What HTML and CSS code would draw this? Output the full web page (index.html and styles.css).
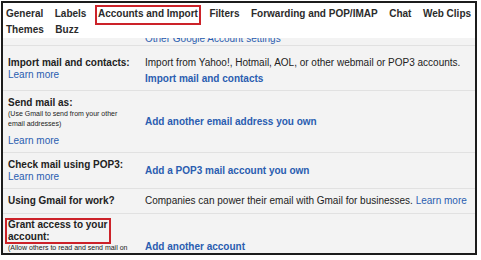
FILE: index.html
```html
<!DOCTYPE html>
<html lang="en">
<head>
    <meta charset="UTF-8">
    <meta name="viewport" content="width=device-width, initial-scale=1.0">
    <title>Gmail Settings - Accounts and Import</title>
    <link rel="stylesheet" href="styles.css">
</head>
<body>
    <div class="frame">
        <!-- Settings tabs -->
        <div class="tabs">
            <span class="tab">General</span>
            <span class="tab">Labels</span>
            <span class="tab active">Accounts and Import</span>
            <span class="tab">Filters</span>
            <span class="tab">Forwarding and POP/IMAP</span>
            <span class="tab">Chat</span>
            <span class="tab">Web Clips</span>
            <span class="tab">Themes</span>
            <span class="tab">Buzz</span>
        </div>

        <div class="settings">
            <div class="row row-cut">
                <div class="cell-label"></div>
                <div class="cell-value"><div class="cut-text"><a class="link">Other Google Account settings</a></div></div>
            </div>

            <div class="row row-import">
                <div class="cell-label">
                    <div class="label">Import mail and contacts:</div>
                    <a class="learn">Learn more</a>
                </div>
                <div class="cell-value top">
                    <div class="text">Import from Yahoo!, Hotmail, AOL, or other webmail or POP3 accounts.</div>
                    <a class="action spaced">Import mail and contacts</a>
                </div>
            </div>

            <div class="row row-send">
                <div class="cell-label">
                    <div class="label">Send mail as:</div>
                    <div class="note">(Use Gmail to send from your other<br>email addresses)</div>
                    <a class="learn spaced">Learn more</a>
                </div>
                <div class="cell-value">
                    <a class="action">Add another email address you own</a>
                </div>
            </div>

            <div class="row row-check">
                <div class="cell-label">
                    <div class="label">Check mail using POP3:</div>
                    <a class="learn">Learn more</a>
                </div>
                <div class="cell-value">
                    <a class="action">Add a POP3 mail account you own</a>
                </div>
            </div>

            <div class="row row-work">
                <div class="cell-label">
                    <div class="label">Using Gmail for work?</div>
                </div>
                <div class="cell-value">
                    <div class="text">Companies can power their email with Gmail for businesses. <a class="learn">Learn more</a></div>
                </div>
            </div>

            <div class="row row-grant">
                <div class="cell-label top">
                    <div class="label boxed">Grant access to your<br>account:</div>
                    <div class="note">(Allow others to read and send mail on</div>
                </div>
                <div class="cell-value">
                    <a class="action">Add another account</a>
                </div>
            </div>
        </div>
    </div>
</body>
</html>
```

FILE: styles.css
```css
/* Global */
body {
    margin: 0;
    background: #fff;
    font-family: 'Liberation Sans', Arial, sans-serif;
    color: #222;
}
.frame {
    margin: 1px 0 0 1px;
    width: 472px;
    height: 250px;
    border: 2px solid #1c1c1c;
    overflow: hidden;
    background: #fff;
}
/* Tabs */
.tabs {
    display: flex;
    flex-wrap: wrap;
    column-gap: 11.5px;
    padding: 3px 0 0 3px;
    font-size: 10px;
    font-weight: bold;
    line-height: 16px;
    color: #2b2b2b;
}
.tab.active {
    padding: 0 2px 2px;
    margin: 0 -2px -2px;
    outline: 2px solid #cc2229;
    outline-offset: -1px;
}
/* Settings table */
.settings {
    background: #f3f3f3;
    font-size: 10px;
}
.row {
    display: grid;
    grid-template-columns: 137px 1fr;
    align-items: center;
    padding-left: 5px;
    border-bottom: 1px solid #e1e1e1;
}
.row-cut { height: 7px; }
.row-import { height: 44px; }
.row-send { height: 61px; }
.row-check { height: 35px; }
.row-work { height: 24px; }
.row-grant { height: 66px; border-bottom: none; }
.top {
    align-self: start;
}
.row-import .top { padding-top: 11px; }
.row-grant .top { padding-top: 5px; }
.cut-text {
    height: 7px;
    overflow: hidden;
}
.cut-text .link {
    display: block;
    margin-top: -4px;
    line-height: 10px;
}
.label {
    font-weight: bold;
    line-height: 12px;
}
.label.boxed {
    display: inline-block;
    padding: 0 2px;
    margin-left: -2px;
    width: 100px;
    outline: 2px solid #cc2229;
    outline-offset: -1px;
}
.note {
    font-size: 7px;
    line-height: 10px;
}
.text {
    line-height: 12px;
}
a {
    color: #2a5db0;
}
.link, .learn {
    display: inline-block;
    line-height: 10px;
}
.action {
    display: block;
    font-weight: bold;
    line-height: 12px;
}
.spaced {
    margin-top: 4px;
}
.learn.spaced {
    margin-top: 7px;
}
```
